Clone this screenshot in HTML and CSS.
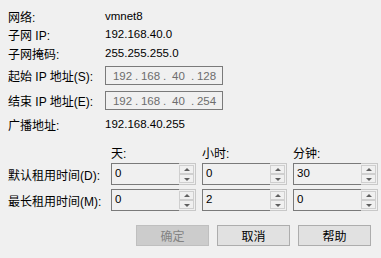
FILE: index.html
```html
<!DOCTYPE html>
<html lang="zh-CN">
<head>
  <meta charset="UTF-8" />
  <title>DHCP 设置</title>
  <link rel="stylesheet" href="styles.css">
</head>
<body>
  <div class="dialog">
    <div class="info">
      <div class="row r18"><span class="label">网络:</span><span class="value">vmnet8</span></div>
      <div class="row r18"><span class="label">子网 IP:</span><span class="value">192.168.40.0</span></div>
      <div class="row r20"><span class="label">子网掩码:</span><span class="value">255.255.255.0</span></div>
      <div class="row r25">
        <span class="label">起始 IP 地址(S):</span>
        <div class="ipbox"><span>192</span><i>.</i><span>168</span><i>.</i><span>40</span><i>.</i><span>128</span></div>
      </div>
      <div class="row r25">
        <span class="label">结束 IP 地址(E):</span>
        <div class="ipbox"><span>192</span><i>.</i><span>168</span><i>.</i><span>40</span><i>.</i><span>254</span></div>
      </div>
      <div class="row r22"><span class="label">广播地址:</span><span class="value">192.168.40.255</span></div>
    </div>

    <div class="lease">
      <span></span>
      <span class="head">天:</span>
      <span class="head">小时:</span>
      <span class="head">分钟:</span>

      <span class="label">默认租用时间(D):</span>
      <div class="spin"><span class="num">0</span><div class="arrows"><b class="up"></b><b class="down"></b></div></div>
      <div class="spin"><span class="num">0</span><div class="arrows"><b class="up"></b><b class="down"></b></div></div>
      <div class="spin"><span class="num">30</span><div class="arrows"><b class="up"></b><b class="down"></b></div></div>

      <span class="label second">最长租用时间(M):</span>
      <div class="spin second"><span class="num">0</span><div class="arrows"><b class="up"></b><b class="down"></b></div></div>
      <div class="spin second"><span class="num">2</span><div class="arrows"><b class="up"></b><b class="down"></b></div></div>
      <div class="spin second"><span class="num">0</span><div class="arrows"><b class="up"></b><b class="down"></b></div></div>
    </div>

    <div class="buttons">
      <button class="btn" disabled>确定</button>
      <button class="btn">取消</button>
      <button class="btn">帮助</button>
    </div>
  </div>
</body>
</html>
```

FILE: styles.css
```css
html, body {
  margin: 0;
  background: #f0f0f0;
}
body {
  font-family: "Liberation Sans", "Noto Sans CJK SC", sans-serif;
  font-size: 11.5px;
  color: #000;
}
.dialog {
  width: 381px;
  height: 258px;
  padding-top: 7px;
  box-sizing: border-box;
}
.info {
  padding-left: 8px;
}
.row {
  display: flex;
  align-items: center;
}
.r18 { height: 18px; }
.r20 { height: 20px; }
.r22 { height: 22px; }
.r25 { height: 25px; }
.label, .head {
  font-size: 12px;
  white-space: nowrap;
}
.label {
  width: 97px;
  flex: none;
}
.ipbox {
  width: 118px;
  height: 19px;
  box-sizing: border-box;
  border: 1px solid #7a7a7a;
  display: flex;
  align-items: center;
  padding-left: 6px;
  color: #6d6d6d;
}
.ipbox span {
  width: 21px;
  text-align: center;
}
.ipbox i {
  font-style: normal;
  width: 7px;
  text-align: center;
}
.lease {
  display: grid;
  grid-template-columns: 97px 85px 85px 85px;
  grid-template-rows: 18px 22px 22px;
  column-gap: 6px;
  row-gap: 2px;
  padding: 8px 0 0 8px;
  align-items: center;
}
.lease .second {
  margin-top: 4px;
}
.head {
  align-self: end;
}
.spin {
  height: 22px;
  display: flex;
  box-sizing: border-box;
}
.num {
  flex: 1;
  border: 1px solid #7a7a7a;
  border-right: none;
  padding: 2px 0 0 3px;
  line-height: 15px;
}
.arrows {
  width: 17px;
  box-sizing: border-box;
  border: 1px solid #c8c8c8;
  border-left: none;
  display: flex;
  flex-direction: column;
  justify-content: space-between;
  padding: 1px 1px 1px 0;
}
.arrows b {
  height: 9px;
  border: 1px solid #cfcfcf;
  box-sizing: border-box;
  position: relative;
}
.arrows b::after {
  content: "";
  position: absolute;
  left: 50%;
  top: 50%;
  margin-left: -3px;
  border-left: 3px solid transparent;
  border-right: 3px solid transparent;
}
.arrows .up::after {
  margin-top: -2px;
  border-bottom: 3px solid #606060;
}
.arrows .down::after {
  margin-top: -1px;
  border-top: 3px solid #606060;
}
.buttons {
  display: flex;
  justify-content: flex-end;
  gap: 8px;
  padding: 16px 10px 0 0;
}
.btn {
  width: 73px;
  height: 21px;
  font-family: "Noto Sans CJK SC", sans-serif;
  font-size: 12px;
  background: #e1e1e1;
  border: 1px solid #adadad;
  color: #000;
  padding: 0;
  line-height: 19px;
}
.btn:disabled {
  background: #cccccc;
  border-color: #bfbfbf;
  color: #838383;
}
```
